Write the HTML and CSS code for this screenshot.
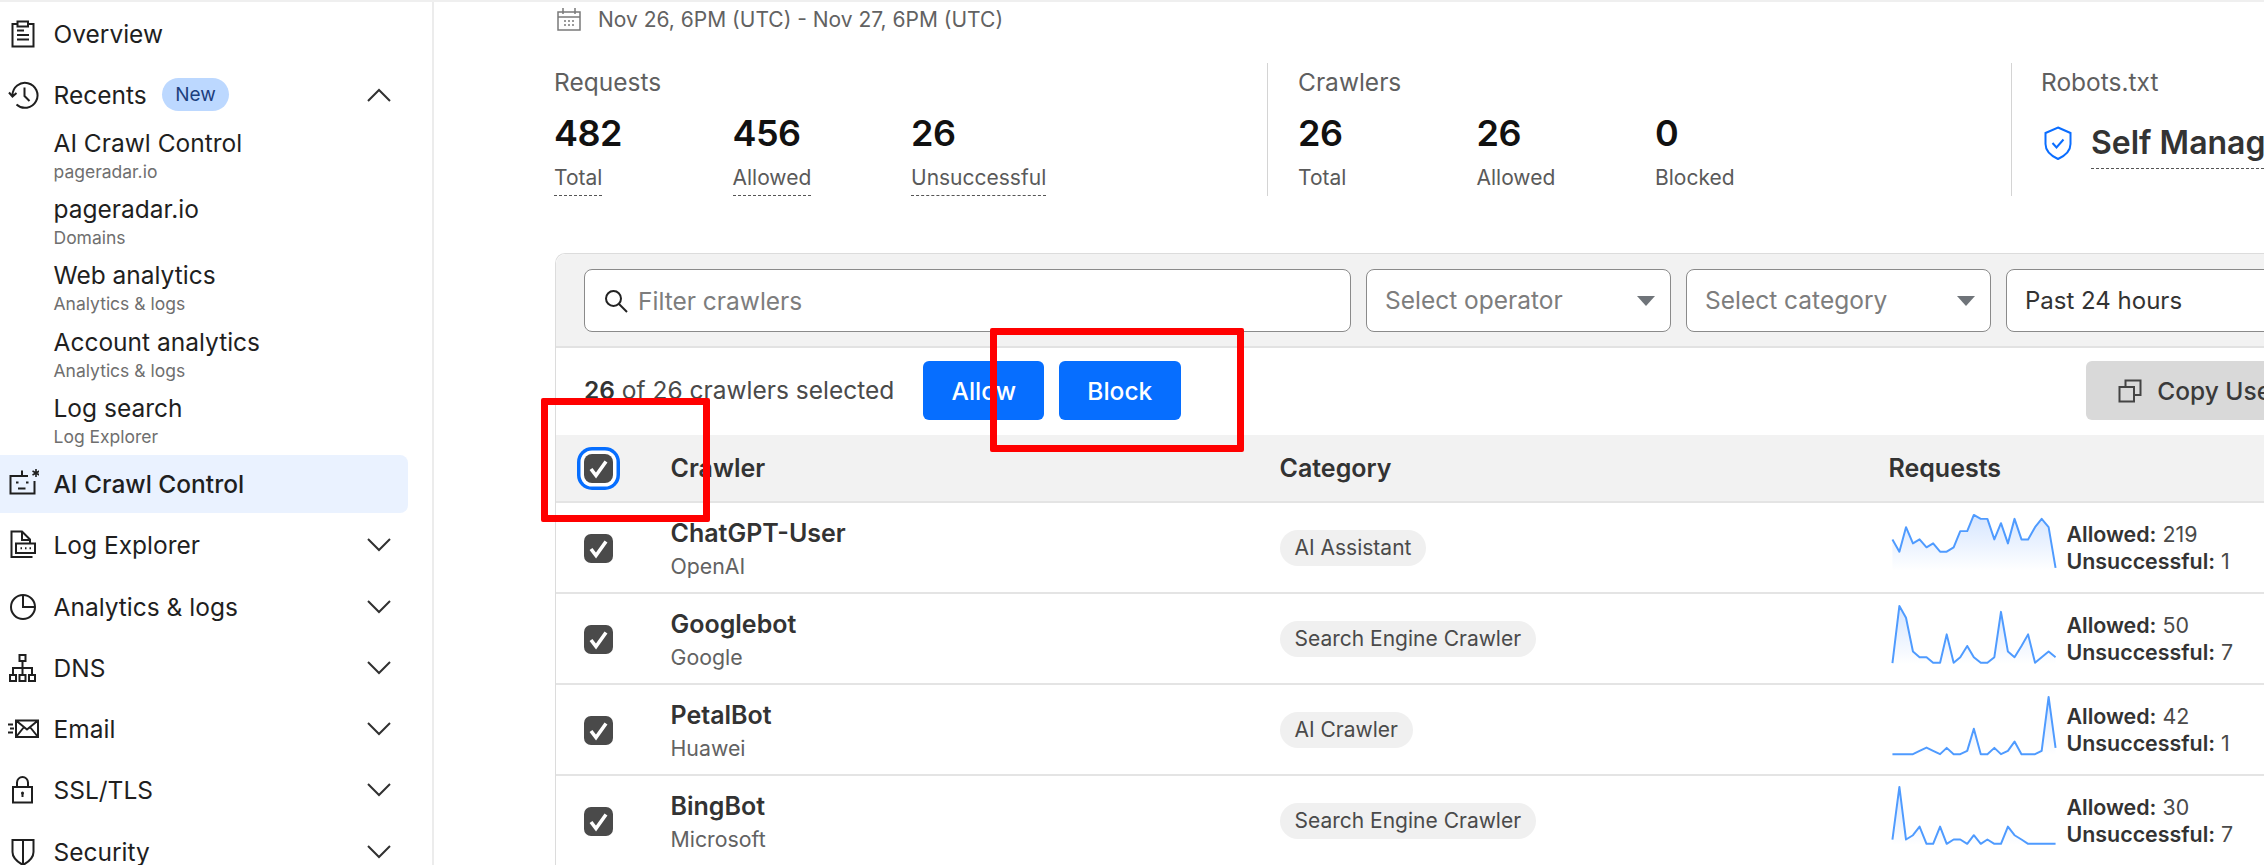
FILE: index.html
```html
<!DOCTYPE html>
<html lang="en">
<head>
<meta charset="utf-8">
<title>AI Crawl Control</title>
<link rel="stylesheet" href="styles.css">
</head>
<body>
<svg class="defs" width="0" height="0" aria-hidden="true">
  <defs>
    <linearGradient id="spark" x1="0" y1="0" x2="0" y2="1">
      <stop offset="0" stop-color="#d5e5ff"/>
      <stop offset="1" stop-color="#ffffff"/>
    </linearGradient>
  </defs>
</svg>
<div class="app">
  <aside class="sidebar">
    <div class="nav-item">
      <svg class="nav-icon" viewBox="0 0 32 32"><path d="M10.5 6H5.5v22.5h21V6h-5M10.5 3.5h10.500v5h-10.500zM10 12.500h7M10 17h12M10 21.500h12"/></svg>
      <span class="nav-label">Overview</span>
    </div>
    <div class="nav-item">
      <svg class="nav-icon" viewBox="0 0 32 32"><path d="M5.500 16.500a12.500 12.500 0 1 1 4 9M2 13.500l3.500 4 4-3.500M17.500 8.500v8.500l5 5"/></svg>
      <span class="nav-label">Recents</span>
      <span class="badge">New</span>
      <svg class="chev" viewBox="0 0 24 14"><path d="M1 13 12 2l11 11"/></svg>
    </div>
    <div class="sub-list">
      <div class="sub-item"><div class="sub-name">AI Crawl Control</div><div class="sub-desc">pageradar.io</div></div>
      <div class="sub-item"><div class="sub-name">pageradar.io</div><div class="sub-desc">Domains</div></div>
      <div class="sub-item"><div class="sub-name">Web analytics</div><div class="sub-desc">Analytics &amp; logs</div></div>
      <div class="sub-item"><div class="sub-name">Account analytics</div><div class="sub-desc">Analytics &amp; logs</div></div>
      <div class="sub-item"><div class="sub-name">Log search</div><div class="sub-desc">Log Explorer</div></div>
    </div>
    <div class="nav-item nav-active">
      <svg class="nav-icon" viewBox="0 0 32 32"><path d="M21 8H3.500v17.500h24V13M15 8V2.500M11 20.500h7.500M9 14.500h2.500M19 14.500h2.500"/><path class="thin" d="M29 1v8M25.500 3l7 4M32.500 3l-7 4"/></svg>
      <span class="nav-label">AI Crawl Control</span>
    </div>
    <div class="nav-item">
      <svg class="nav-icon" viewBox="0 0 32 32"><path d="M4.500 20V2.500h10.500l8 8v3M15 3v8h8M4.500 20v8h21M9 14.500h19v9.500H9zM13.500 19.200h1.500M18 19.200h1.500M22.500 19.200h1.500"/></svg>
      <span class="nav-label">Log Explorer</span>
      <svg class="chev" viewBox="0 0 24 14"><path d="M1 1l11 11L23 1"/></svg>
    </div>
    <div class="nav-item">
      <svg class="nav-icon" viewBox="0 0 32 32"><circle cx="16" cy="16" r="12"/><path d="M16 4v12h12"/></svg>
      <span class="nav-label">Analytics &amp; logs</span>
      <svg class="chev" viewBox="0 0 24 14"><path d="M1 1l11 11L23 1"/></svg>
    </div>
    <div class="nav-item">
      <svg class="nav-icon" viewBox="0 0 32 32"><path d="M12.500 3h6v6h-6zM3 23h6v6H3zM12.500 23h6v6h-6zM22 23h6v6h-6zM15.500 9v14M6 23v-7h19v7"/></svg>
      <span class="nav-label">DNS</span>
      <svg class="chev" viewBox="0 0 24 14"><path d="M1 1l11 11L23 1"/></svg>
    </div>
    <div class="nav-item">
      <svg class="nav-icon nav-icon-email" viewBox="0 0 32 32"><path d="M9 7.500h22v16.500H9zM9 7.500l11 9 11-9M9 24l8-10M31 24l-8-10M1 11.500h5M3 15.500h4M1 19.500h5"/></svg>
      <span class="nav-label">Email</span>
      <svg class="chev" viewBox="0 0 24 14"><path d="M1 1l11 11L23 1"/></svg>
    </div>
    <div class="nav-item">
      <svg class="nav-icon" viewBox="0 0 32 32"><path d="M6 13h19v15.500H6zM10 13V8.500a5.500 5.500 0 0 1 11 0V13M15.500 19v4"/><circle class="dot" cx="15.500" cy="19" r="1.500"/></svg>
      <span class="nav-label">SSL/TLS</span>
      <svg class="chev" viewBox="0 0 24 14"><path d="M1 1l11 11L23 1"/></svg>
    </div>
    <div class="nav-item">
      <svg class="nav-icon" viewBox="0 0 32 32"><path d="M5.500 4h21v12c0 6-5 10-10.500 13C10.500 26 5.500 22 5.500 16zM16 4v25"/></svg>
      <span class="nav-label">Security</span>
      <svg class="chev" viewBox="0 0 24 14"><path d="M1 1l11 11L23 1"/></svg>
    </div>
  </aside>

  <main class="main">
    <div class="date-row">
      <svg class="date-icon" viewBox="0 0 24 24"><path d="M1 5h22v18H1zM1 10h22M6 1v6M18 1v6M7 14h2M11 14h2M15 14h2M7 18h2M11 18h2M15 18h2"/></svg>
      <span>Nov 26, 6PM (UTC) - Nov 27, 6PM (UTC)</span>
    </div>

    <section class="stats">
      <div class="stat-group">
        <div class="stat-title">Requests</div>
        <div class="stat-cells">
          <div class="stat"><div class="stat-num">482</div><div class="stat-label dashed">Total</div></div>
          <div class="stat"><div class="stat-num">456</div><div class="stat-label dashed">Allowed</div></div>
          <div class="stat"><div class="stat-num">26</div><div class="stat-label dashed">Unsuccessful</div></div>
        </div>
      </div>
      <div class="stat-group">
        <div class="stat-title">Crawlers</div>
        <div class="stat-cells">
          <div class="stat"><div class="stat-num">26</div><div class="stat-label">Total</div></div>
          <div class="stat"><div class="stat-num">26</div><div class="stat-label">Allowed</div></div>
          <div class="stat"><div class="stat-num">0</div><div class="stat-label">Blocked</div></div>
        </div>
      </div>
      <div class="stat-group stat-robots">
        <div class="stat-title">Robots.txt</div>
        <div class="robots-row">
          <svg class="shield" viewBox="0 0 28 34"><path d="M14 1.500 26.500 7v11c0 7-6 12-12.500 15C7.500 30 1.500 25 1.500 18V7zM8.500 17l4 4.500 7-8"/></svg>
          <span class="robots-text">Self Managed</span>
        </div>
      </div>
    </section>

    <section class="card">
      <div class="filters">
        <div class="field field-search">
          <svg class="search-icon" viewBox="0 0 24 24"><circle cx="9.500" cy="9.500" r="7.500"/><path d="M15 15l8 8"/></svg>
          <span class="placeholder">Filter crawlers</span>
        </div>
        <div class="field field-select"><span class="placeholder placeholder-select">Select operator</span><span class="caret"></span></div>
        <div class="field field-select"><span class="placeholder placeholder-select">Select category</span><span class="caret"></span></div>
        <div class="field field-select"><span class="value">Past 24 hours</span></div>
      </div>

      <div class="actions">
        <span class="selected"><b>26</b> of 26 crawlers selected</span>
        <button class="btn btn-primary btn-allow">Allow</button>
        <button class="btn btn-primary">Block</button>
        <button class="btn btn-copy">
          <svg class="copy-icon" viewBox="0 0 24 24"><path d="M1.500 8h14.500v14.500H1.500zM7.500 8V1.500h15V16H16"/></svg>
          Copy User Agents
        </button>
      </div>

      <div class="row row-head">
        <div class="cell-check"><span class="check check-focus"><svg viewBox="0 0 29 29"><path d="M7 15l5 6.500 10-14"/></svg></span></div>
        <div>Crawler</div>
        <div>Category</div>
        <div>Requests</div>
      </div>

      <div class="row">
        <div class="cell-check"><span class="check"><svg viewBox="0 0 29 29"><path d="M7 15l5 6.500 10-14"/></svg></span></div>
        <div><div class="name">ChatGPT-User</div><div class="org">OpenAI</div></div>
        <div><span class="pill">AI Assistant</span></div>
        <div class="req">
          <svg class="spark" viewBox="97 5 493 272">
            <polygon class="spark-fill" points="97,115 118,152 138,78 159,127 179,115 200,139 220,127 241,152 261,152 282,139 302,90 323,90 343,41 364,53 384,53 405,115 425,66 446,127 466,53 487,115 507,115 528,78 548,53 569,78 590,201 590,210 97,210"/>
            <polyline class="spark-line" points="97,115 118,152 138,78 159,127 179,115 200,139 220,127 241,152 261,152 282,139 302,90 323,90 343,41 364,53 384,53 405,115 425,66 446,127 466,53 487,115 507,115 528,78 548,53 569,78 590,201"/>
          </svg>
          <div class="req-text"><div><b>Allowed:</b> 219</div><div><b>Unsuccessful:</b> 1</div></div>
        </div>
      </div>

      <div class="row">
        <div class="cell-check"><span class="check"><svg viewBox="0 0 29 29"><path d="M7 15l5 6.500 10-14"/></svg></span></div>
        <div><div class="name">Googlebot</div><div class="org">Google</div></div>
        <div><span class="pill">Search Engine Crawler</span></div>
        <div class="req">
          <svg class="spark" viewBox="97 278 493 272">
            <polygon class="spark-fill" points="97,487 118,314 138,350 159,452 179,469 200,469 220,486 241,486 261,400 282,486 302,469 323,435 343,469 364,486 384,486 405,469 425,332 446,452 466,469 487,435 507,400 528,486 548,469 569,452 590,469 590,490 97,490"/>
            <polyline class="spark-line" points="97,487 118,314 138,350 159,452 179,469 200,469 220,486 241,486 261,400 282,486 302,469 323,435 343,469 364,486 384,486 405,469 425,332 446,452 466,469 487,435 507,400 528,486 548,469 569,452 590,469"/>
          </svg>
          <div class="req-text"><div><b>Allowed:</b> 50</div><div><b>Unsuccessful:</b> 7</div></div>
        </div>
      </div>

      <div class="row">
        <div class="cell-check"><span class="check"><svg viewBox="0 0 29 29"><path d="M7 15l5 6.500 10-14"/></svg></span></div>
        <div><div class="name">PetalBot</div><div class="org">Huawei</div></div>
        <div><span class="pill">AI Crawler</span></div>
        <div class="req">
          <svg class="spark" viewBox="97 551 493 272">
            <polygon class="spark-fill" points="97,760 118,760 138,760 159,760 179,750 200,740 220,750 241,760 261,741 282,760 302,760 323,750 343,683 364,760 384,760 405,741 425,760 446,750 466,722 487,760 507,760 528,760 548,750 569,587 590,741 590,762 97,762"/>
            <polyline class="spark-line" points="97,760 118,760 138,760 159,760 179,750 200,740 220,750 241,760 261,741 282,760 302,760 323,750 343,683 364,760 384,760 405,741 425,760 446,750 466,722 487,760 507,760 528,760 548,750 569,587 590,741"/>
          </svg>
          <div class="req-text"><div><b>Allowed:</b> 42</div><div><b>Unsuccessful:</b> 1</div></div>
        </div>
      </div>

      <div class="row">
        <div class="cell-check"><span class="check"><svg viewBox="0 0 29 29"><path d="M7 15l5 6.500 10-14"/></svg></span></div>
        <div><div class="name">BingBot</div><div class="org">Microsoft</div></div>
        <div><span class="pill">Search Engine Crawler</span></div>
        <div class="req">
          <svg class="spark" viewBox="97 824 493 272">
            <polygon class="spark-fill" points="97,1016 118,857 138,1016 159,1003 179,977 200,1029 220,1029 241,977 261,1029 282,1016 302,1016 323,1029 343,1003 364,1029 384,1016 405,1029 425,1029 446,977 466,1003 487,1016 507,1029 528,1029 548,1029 569,1029 590,1029 97,1032"/>
            <polyline class="spark-line" points="97,1016 118,857 138,1016 159,1003 179,977 200,1029 220,1029 241,977 261,1029 282,1016 302,1016 323,1029 343,1003 364,1029 384,1016 405,1029 425,1029 446,977 466,1003 487,1016 507,1029 528,1029 548,1029 569,1029 590,1029"/>
          </svg>
          <div class="req-text"><div><b>Allowed:</b> 30</div><div><b>Unsuccessful:</b> 7</div></div>
        </div>
      </div>
    </section>
  </main>
</div>
<div class="mark mark-check"></div>
<div class="mark mark-block"></div>
</body>
</html>
```
FILE: styles.css
```css
* { box-sizing: border-box; }
html, body { margin: 0; padding: 0; }
body {
  width: 2264px;
  height: 865px;
  overflow: hidden;
  position: relative;
  background: #fff;
  color: #313131;
  font-family: Inter, "Liberation Sans", sans-serif;
  font-size: 24.500px;
}
.defs { position: absolute; }
.app {
  display: flex;
  height: 865px;
  border-top: 2px solid #efefef;
  overflow: hidden;
}

/* Sidebar */
.sidebar {
  flex: 0 0 434px;
  height: 880px;
  border-right: 2px solid #ececec;
  padding: 1px 24px 0 0;
}
.nav-item {
  display: flex;
  align-items: center;
  height: 61.300px;
  padding-left: 7px;
  color: #1f1f1f;
}
.nav-icon {
  flex: 0 0 32px;
  width: 32px;
  height: 32px;
  margin-right: 14.500px;
  fill: none;
  stroke: #1f1f1f;
  stroke-width: 2;
}
.nav-icon .thin { stroke-width: 1.600; }
.nav-icon .dot { fill: #1f1f1f; stroke: none; }
.nav-label { line-height: 32px; }
.badge {
  margin-left: 15px;
  height: 33px;
  padding: 0 13.500px;
  border-radius: 17px;
  background: #bcd8ff;
  color: #1c3f7e;
  font-size: 19px;
  line-height: 33px;
}
.chev {
  margin-left: auto;
  margin-right: 17px;
  width: 24px;
  height: 14px;
  fill: none;
  stroke: #313131;
  stroke-width: 2;
  flex: none;
}
.sub-list {
  display: flex;
  flex-direction: column;
  gap: 8.400px;
  margin-top: 0;
  margin-bottom: 6px;
  padding-left: 53.500px;
}
.sub-item { height: 58px; }
.sub-name { line-height: 34px; color: #1f1f1f; }
.sub-desc { font-size: 17.500px; line-height: 24px; color: #6f6f6f; }
.nav-active {
  height: 58px;
  margin-bottom: 1.500px;
  background: #eaf2ff;
  border-radius: 0 8px 8px 0;
  font-weight: 500;
}

/* Main */
.main {
  flex: 1 1 auto;
  min-width: 0;
  padding-left: 120px;
  overflow: hidden;
}
.date-row {
  display: flex;
  align-items: center;
  height: 34px;
  padding-left: 3px;
  color: #626262;
  font-size: 21px;
}
.date-icon {
  width: 24px;
  height: 24px;
  margin-right: 17px;
  fill: none;
  stroke: #7a7a7a;
  stroke-width: 1.500;
}
.stats {
  display: flex;
  width: 1800px;
  margin-top: 27px;
}
.stat-group {
  flex: 0 0 714px;
  height: 133px;
  border-right: 1px solid #d4d4d4;
}
.stat-group + .stat-group { padding-left: 30px; flex-basis: 744px; }
.stat-group.stat-robots { border-right: 0; flex-basis: 400px; padding-left: 29px; }
.stat-title { color: #5f5f5f; line-height: 38px; }
.stat-cells { display: flex; margin-top: 10px; }
.stat { flex: 0 0 178.500px; }
.stat-num {
  color: #111;
  font-size: 36px;
  font-weight: 600;
  line-height: 44px;
  letter-spacing: -0.500px;
}
.stat-label {
  display: inline-block;
  margin-top: 8.500px;
  color: #5a5a5a;
  font-size: 21px;
  line-height: 27px;
  padding-bottom: 4.500px;
}
.dashed { border-bottom: 1px dashed #555; }
.robots-row {
  display: flex;
  align-items: center;
  margin-top: 21px;
  white-space: nowrap;
}
.shield {
  width: 28px;
  height: 34px;
  margin: 0 19px 6px 3px;
  fill: none;
  stroke: #0a6dff;
  stroke-width: 2;
  flex: none;
}
.robots-text {
  color: #333;
  font-size: 32px;
  font-weight: 600;
  line-height: 42px;
  padding-bottom: 4px;
  border-bottom: 1px dashed #555;
}

/* Card */
.card {
  width: 1800px;
  margin: 57px 0 0 1px;
  border: 1px solid #dcdcdc;
  border-bottom: 0;
  border-radius: 10px 0 0 0;
}
.filters {
  display: flex;
  gap: 15px;
  height: 94px;
  padding: 15px 28px;
  background: #f2f2f2;
  border-bottom: 2px solid #e2e2e2;
  border-radius: 10px 0 0 0;
}
.field {
  display: flex;
  align-items: center;
  height: 63px;
  background: #fff;
  border: 1px solid #8a8a8a;
  border-radius: 8px;
  padding: 0 18px;
  flex: 0 0 305px;
}
.field-search { flex-basis: 767px; padding-left: 19px; }
.field-select { justify-content: space-between; }
.search-icon {
  width: 24px;
  height: 24px;
  margin-right: 10px;
  fill: none;
  stroke: #222;
  stroke-width: 2;
}
.placeholder { color: #7d7d7d; }
.placeholder-select { margin-bottom: 2px; }
.value { color: #333; font-size: 24px; }
.caret {
  width: 0;
  height: 0;
  margin-right: -3px;
  border-left: 9px solid transparent;
  border-right: 9px solid transparent;
  border-top: 10px solid #6f7479;
}
.actions {
  display: flex;
  align-items: flex-start;
  height: 87px;
  padding: 13px 0 0 28px;
}
.selected { line-height: 59px; color: #4a4a4a; white-space: nowrap; }
.selected b { font-weight: 600; color: #333; }
.btn {
  flex: none;
  height: 59px;
  border: 0;
  border-radius: 6px;
  padding: 0;
  font: inherit;
  font-weight: 500;
}
.btn-primary {
  width: 122px;
  margin-left: 14.500px;
  background: #066eff;
  color: #fff;
}
.btn-allow { width: 121px; margin-left: 29px; }
.btn-copy {
  display: flex;
  align-items: center;
  gap: 15.500px;
  margin-left: 905px;
  padding: 0 32px;
  background: #d9d9d9;
  color: #3a3a3a;
  white-space: nowrap;
}
.copy-icon {
  width: 24px;
  height: 24px;
  fill: none;
  stroke: #444;
  stroke-width: 2;
}
.row {
  display: grid;
  grid-template-columns: 114.500px 609px 609px 1fr;
  align-items: center;
  height: 91px;
  border-bottom: 2px solid #e4e4e4;
}
.row-head {
  height: 68px;
  background: #f2f2f2;
  font-size: 25px;
  font-weight: 600;
  color: #333;
}
.cell-check { padding-left: 28px; display: flex; align-items: center; }
.check {
  display: block;
  width: 29px;
  height: 29px;
  margin-top: 1px;
  background: #4a4a4a;
  border-radius: 7px;
  line-height: 0;
}
.check svg {
  width: 29px;
  height: 29px;
  fill: none;
  stroke: #fff;
  stroke-width: 3.600;
}
.check-focus {
  margin-top: 0;
  border-radius: 8px;
  box-shadow: 0 0 0 3.500px #fff, 0 0 0 7px #066eff;
}
.name { font-size: 25px; font-weight: 600; line-height: 31px; color: #333; margin-top: 3px; }
.org { font-size: 21.300px; line-height: 30px; margin-top: 2px; color: #626262; }
.pill {
  display: inline-block;
  height: 36px;
  padding: 0 15px;
  border-radius: 18px;
  background: #f0f0f0;
  color: #4a4a4a;
  font-size: 21px;
  line-height: 36px;
}
.req { display: flex; align-items: center; height: 89px; margin-left: 3px; }
.spark {
  flex: 0 0 164px;
  width: 164px;
  height: 90px;
  overflow: visible;
}
.spark-line { fill: none; stroke: #4f9bff; stroke-width: 6; stroke-linejoin: round; }
.spark-fill { fill: url(#spark); stroke: none; }
.req-text {
  margin-left: 11px;
  font-size: 21.400px;
  line-height: 27px;
  color: #4a4a4a;
  white-space: nowrap;
}
.req-text b { font-weight: 600; color: #333; }

/* Red annotation rectangles drawn over the screenshot */
.mark {
  position: absolute;
  border: 7px solid #ff0000;
  border-radius: 2px;
  pointer-events: none;
}
.mark-check { left: 541px; top: 398px; width: 169px; height: 124px; }
.mark-block { left: 990px; top: 328px; width: 254px; height: 124px; }
```
